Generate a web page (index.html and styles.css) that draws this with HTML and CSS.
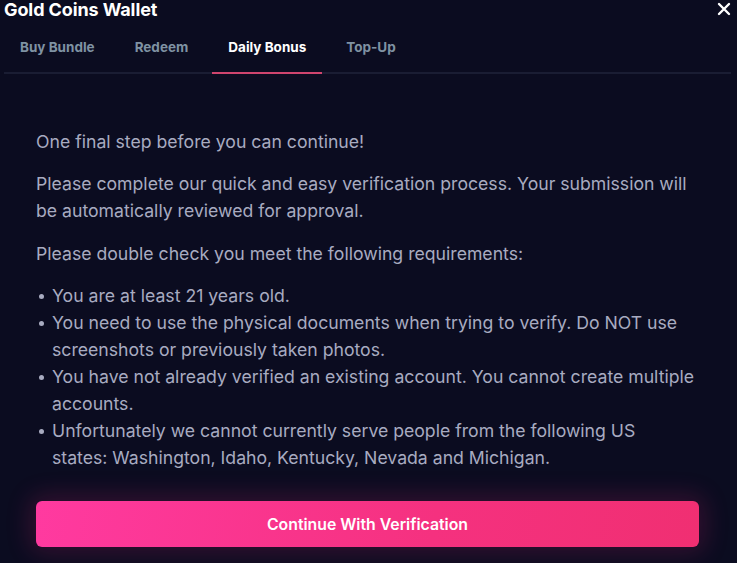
FILE: index.html
```html
<!DOCTYPE html>
<html lang="en">
<head>
<meta charset="utf-8">
<title>Gold Coins Wallet</title>
<link rel="stylesheet" href="styles.css">
</head>
<body>
<div class="modal">
  <header class="modal-header">
    <h1 class="modal-title">Gold Coins Wallet</h1>
    <button class="close-btn" aria-label="Close">
      <svg width="14" height="14" viewBox="0 0 14 14"><path d="M2 2 L12 12 M12 2 L2 12" stroke="#ffffff" stroke-width="2.4" stroke-linecap="round"/></svg>
    </button>
  </header>
  <nav class="tabs">
    <span class="tab">Buy Bundle</span>
    <span class="tab">Redeem</span>
    <span class="tab active">Daily Bonus</span>
    <span class="tab">Top-Up</span>
  </nav>
  <main class="content">
    <p>One final step before you can continue!</p>
    <p>Please complete our quick and easy verification process. Your submission will be automatically reviewed for approval.</p>
    <p>Please double check you meet the following requirements:</p>
    <ul class="reqs">
      <li>You are at least 21 years old.</li>
      <li>You need to use the physical documents when trying to verify. Do NOT use screenshots or previously taken photos.</li>
      <li>You have not already verified an existing account. You cannot create multiple accounts.</li>
      <li>Unfortunately we cannot currently serve people from the following US<br>states: Washington, Idaho, Kentucky, Nevada and Michigan.</li>
    </ul>
    <button class="cta">Continue With Verification</button>
  </main>
</div>
</body>
</html>
```
FILE: styles.css
```css
* { box-sizing: border-box; }
html, body {
  margin: 0;
  padding: 0;
  background: #0b0c20;
  height: 100%;
}
body {
  font-family: Inter, "Noto Sans", sans-serif;
  overflow: hidden;
}
.modal {
  width: 737px;
  height: 563px;
  background: #0b0c20;
  display: flex;
  flex-direction: column;
}
.modal-header {
  display: flex;
  justify-content: space-between;
  align-items: flex-start;
  padding: 0 6px 0 4px;
  height: 28px;
}
.modal-title {
  margin: 0;
  font-size: 18px;
  font-weight: 700;
  color: #ffffff;
  line-height: 19px;
  letter-spacing: -0.1px;
}
.close-btn {
  background: none;
  border: 0;
  padding: 0;
  margin-top: 2px;
  width: 14px;
  height: 14px;
  display: flex;
  cursor: pointer;
}
.tabs {
  display: flex;
  gap: 8px;
  margin: 0 6px 0 4px;
  border-bottom: 2px solid #1a1d33;
  height: 46px;
}
.tab {
  padding: 10px 16px 0;
  font-size: 13.5px;
  font-weight: 700;
  color: #7f92a3;
  line-height: 18px;
  margin-bottom: -2px;
  border-bottom: 2px solid transparent;
}
.tab.active {
  color: #ffffff;
  border-bottom-color: #d0456e;
}
.content {
  padding: 54px 38px 0 36px;
  color: #a8abc0;
  font-size: 17.65px;
  line-height: 27px;
}
.content p {
  margin: 0 0 16px;
}
.content p + p {
  margin-top: -1px;
}
.content p:nth-of-type(3) {
  margin-top: 0;
}
.reqs {
  margin: -1px 0 0;
  padding: 0 0 0 16px;
  list-style: none;
}
.reqs li {
  position: relative;
}
.reqs li::before {
  content: "";
  position: absolute;
  left: -13px;
  top: 12px;
  width: 5px;
  height: 5px;
  border-radius: 50%;
  background: #a8abc0;
}
.cta {
  display: block;
  width: 663px;
  height: 46px;
  margin-top: 30px;
  border: 0;
  border-radius: 6px;
  background: linear-gradient(100deg, #ff3aa0 0%, #f5317f 60%, #f02f72 100%);
  box-shadow: 0 0 24px 6px rgba(240, 40, 120, 0.18);
  color: #ffffff;
  font-family: Inter, "Noto Sans", sans-serif;
  font-size: 15.8px;
  font-weight: 600;
  cursor: pointer;
}
```
